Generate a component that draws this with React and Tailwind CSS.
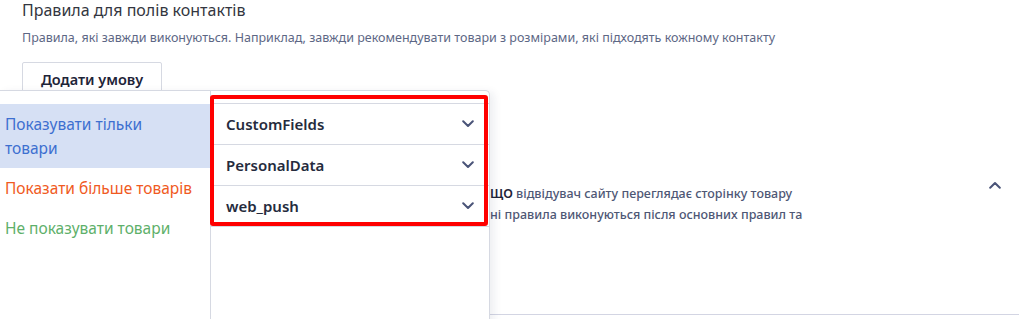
import React from "react";

const Chevron = ({ up = false }) => (
  <svg width="12" height="8" viewBox="0 0 12 8" fill="none" className="shrink-0">
    <path
      d={up ? "M1.2 6.8L6 2L10.8 6.8" : "M1.2 1.2L6 6L10.8 1.2"}
      stroke="#4a5478"
      strokeWidth="2"
      strokeLinecap="round"
      strokeLinejoin="round"
    />
  </svg>
);

export default function App() {
  const fields = ["CustomFields", "PersonalData", "web_push"];
  return (
    <div
      className="relative w-[1031px] h-[319px] overflow-hidden bg-white"
      style={{ fontFamily: '"Noto Sans", "Open Sans", sans-serif' }}
    >
      {/* page header */}
      <div className="pl-[22px] pt-[0px]">
        <h2 className="text-[16px] leading-[20px] text-[#333640]">Правила для полів контактів</h2>
        <p className="mt-[9px] text-[12.5px] leading-[18px] text-[#5d6785]">
          Правила, які завжди виконуються. Наприклад, завжди рекомендувати товари з розмірами, які підходять кожному контакту
        </p>
        <button className="mt-[15px] h-[36px] w-[140px] rounded-[2px] border border-[#d6d9e2] bg-white text-[14.5px] font-semibold text-[#1e2438]">
          Додати умову
        </button>
      </div>

      {/* background card (partly covered) */}
      <div className="ml-[22px] mr-[12px] h-[217px] border-b border-[#d3d5e3]">
        <div className="flex items-start justify-between pt-[83px] pr-[18px]">
          <div className="pl-[468px] pt-[2px] text-[12.5px] font-medium leading-[21px] text-[#4e5775]">
            <div>
              <span className="font-semibold text-[#1e2438]">ЩО</span> відвідувач сайту переглядає сторінку товару
            </div>
            <div>ні правила виконуються після основних правил та</div>
          </div>
          <div>
            <Chevron up />
          </div>
        </div>
      </div>

      {/* dropdown popup */}
      <div className="absolute left-0 top-[90px] flex h-[240px] w-[490px] rounded-tr-[5px] border-t border-r border-[#d6d9e2] bg-white shadow-[4px_2px_8px_rgba(30,40,80,0.08)]">
        <div className="w-[210px] shrink-0 pt-[13px] text-[15.5px] leading-[24px]">
          <div className="bg-[#d6e0f4] pl-[5px] pr-[30px] py-[8px] text-[#3d6fd0]">Показувати тільки товари</div>
          <div className="pl-[5px] pr-[5px] py-[8px] text-[#f05a22]">Показати більше товарів</div>
          <div className="pl-[5px] pr-[5px] py-[8px] text-[#5eb06a]">Не показувати товари</div>
        </div>
        <div className="flex-1 border-l border-[#d6d9e2] pt-[12px]">
          <div className="border-t border-[#d6d9e2]">
            {fields.map((f) => (
              <div
                key={f}
                className="flex h-[41px] items-center justify-between border-b border-[#d6d9e2] pl-[15px] pr-[15px]"
              >
                <span className="text-[15px] font-semibold text-[#252b3d]">{f}</span>
                <Chevron />
              </div>
            ))}
          </div>
        </div>
      </div>

      {/* red annotation */}
      <div className="pointer-events-none absolute left-[210px] top-[95px] h-[131px] w-[278px] rounded-[3px] border-4 border-[#ff0000]" />
    </div>
  );
}
